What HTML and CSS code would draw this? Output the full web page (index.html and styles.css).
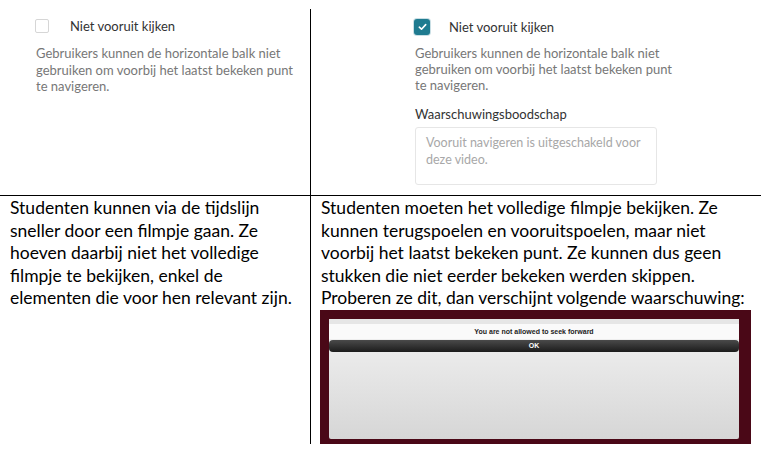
FILE: index.html
```html
<!DOCTYPE html>
<html lang="nl">
<head>
  <meta charset="UTF-8" />
  <title>Niet vooruit kijken</title>
  <link rel="stylesheet" href="styles.css">
</head>
<body>
  <div class="table">

    <!-- Top row: settings screenshots -->
    <div class="cell top left">
      <div class="check-row">
        <span class="checkbox"></span>
        <span class="check-label">Niet vooruit kijken</span>
      </div>
      <p class="help">Gebruikers kunnen de horizontale balk niet<br>gebruiken om voorbij het laatst bekeken punt<br>te navigeren.</p>
    </div>

    <div class="cell top right">
      <div class="check-row">
        <span class="checkbox checked">
          <svg width="9" height="8" viewBox="0 0 9 8"><path d="M1.3 4.2 L3.5 6.2 L7.7 1.6" fill="none" stroke="#fff" stroke-width="1.6" stroke-linecap="round" stroke-linejoin="round"/></svg>
        </span>
        <span class="check-label">Niet vooruit kijken</span>
      </div>
      <p class="help">Gebruikers kunnen de horizontale balk niet<br>gebruiken om voorbij het laatst bekeken punt<br>te navigeren.</p>
      <div class="field-label">Waarschuwingsboodschap</div>
      <div class="textarea">Vooruit navigeren is uitgeschakeld voor<br>deze video.</div>
    </div>

    <!-- Bottom row: explanation -->
    <div class="cell bottom left">
      <p class="doc">Studenten kunnen via de tijdslijn<br>sneller door een filmpje gaan. Ze<br>hoeven daarbij niet het volledige<br>filmpje te bekijken, enkel de<br>elementen die voor hen relevant zijn.</p>
    </div>

    <div class="cell bottom right">
      <p class="doc">Studenten moeten het volledige filmpje bekijken. Ze<br>kunnen terugspoelen en vooruitspoelen, maar niet<br>voorbij het laatst bekeken punt. Ze kunnen dus geen<br>stukken die niet eerder bekeken werden skippen.<br>Proberen ze dit, dan verschijnt volgende waarschuwing:</p>
      <div class="shot">
        <div class="dialog">
          <div class="dialog-top"></div>
          <div class="dialog-title">You are not allowed to seek forward</div>
          <div class="dialog-btn">OK</div>
        </div>
      </div>
    </div>

  </div>
</body>
</html>
```

FILE: styles.css
```css
body {
  margin: 0;
  background: #fff;
  font-family: Lato, "Open Sans", sans-serif;
}
.table {
  display: grid;
  grid-template-columns: 310px 451px;
  grid-template-rows: 187px auto;
  padding-top: 9px;
  width: 761px;
}
.cell.right {
  border-left: 1px solid #000;
}
.cell.top {
  border-bottom: 1px solid #000;
}
.cell.top.left {
  padding: 10px 0 0 35px;
}
.cell.top.right {
  padding: 9px 0 0 103px;
}
.check-row {
  display: flex;
  align-items: center;
  height: 14px;
}
.checkbox {
  width: 12px;
  height: 12px;
  border: 1px solid #d6d6d6;
  border-radius: 2px;
  background: #fff;
}
.checkbox.checked {
  width: 16px;
  height: 16px;
  border: none;
  border-radius: 3px;
  background: #1f7b90;
  box-shadow: 0 0 0 1px #c9dfe5;
  display: flex;
  align-items: center;
  justify-content: center;
}
.check-label {
  margin-left: 21px;
  font-size: 13px;
  color: #333;
}
.cell.top.right .check-row {
  height: 18px;
}
.cell.top.right .check-label {
  margin-left: 19px;
}
.help {
  margin: 12px 0 0 1px;
  font-size: 13px;
  line-height: 16.5px;
  color: #777;
}
.cell.top.right .help {
  margin-top: 9px;
  line-height: 16px;
}
.field-label {
  margin: 13px 0 0 1px;
  font-size: 13px;
  color: #333;
}
.textarea {
  margin: 5px 0 0 1px;
  width: 220px;
  height: 42px;
  padding: 6px 10px 8px 10px;
  border: 1px solid #e6e6e6;
  border-radius: 3px;
  font-size: 12.5px;
  line-height: 17px;
  color: #a8a8a8;
  white-space: nowrap;
  overflow: hidden;
}
.doc {
  margin: 0;
  padding: 1px 0 0 10px;
  font-family: Lato, "Liberation Sans", sans-serif;
  font-size: 17.5px;
  line-height: 22.5px;
  color: #000;
}
.shot {
  margin: 0 0 0 9px;
  width: 431px;
  height: 134px;
  background: #4a0817;
  padding: 9px 12px 5px 9px;
  box-sizing: border-box;
}
.dialog {
  height: 120px;
  border-radius: 2px;
  background: linear-gradient(#f3f3f3, #d6d6d6);
  display: flex;
  flex-direction: column;
  font-family: "Liberation Sans", sans-serif;
}
.dialog-top {
  height: 5px;
  background: #e6e6e6;
}
.dialog-title {
  height: 15px;
  background: #fafafa;
  text-align: center;
  font-size: 7px;
  line-height: 15px;
  font-weight: bold;
  color: #222;
}
.dialog-btn {
  height: 12px;
  margin: 1px 0 0 0;
  border-radius: 4px;
  background: linear-gradient(#4a4a4a, #1c1c1c);
  text-align: center;
  font-size: 7px;
  line-height: 12px;
  font-weight: bold;
  color: #fff;
}
```
